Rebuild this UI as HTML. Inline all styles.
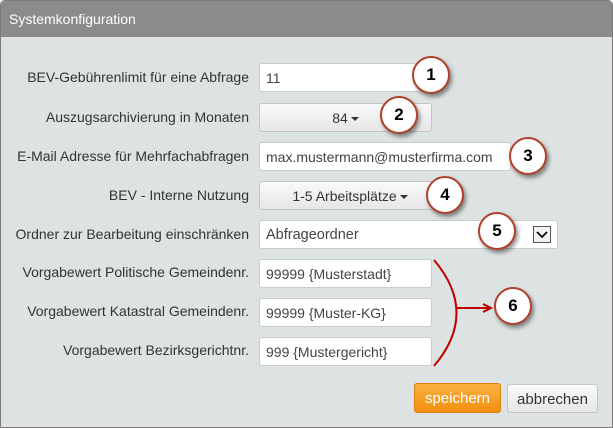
<!DOCTYPE html>
<html><head><meta charset="utf-8"><style>
*{margin:0;padding:0;box-sizing:border-box}
body{width:613px;height:428px;font-family:"Liberation Sans",Arial,sans-serif;font-size:14px;color:#333;background:#fff;position:relative;overflow:hidden}
.dlg{position:absolute;left:0;top:0;width:613px;height:428px;border:1px solid #7a7a7a;border-radius:5px 5px 0 0;background:#dde3e2;overflow:hidden}
.tb{position:absolute;left:0;top:0;right:0;height:36px;background:#8b8b8b;color:#fff;font-size:14px;padding:10px 0 0 8px}
.lbl{position:absolute;right:363px;text-align:right;white-space:nowrap;color:#333}
.inp{position:absolute;left:258px;background:#fff;border:1px solid #c9cccc;border-radius:3px;height:29px;padding:6px 0 0 6px;color:#444}
.btn{position:absolute;left:258px;border:1px solid #c4c4c4;border-radius:3px;height:29px;background:linear-gradient(#fafafa,#e6e6e6);text-align:center;padding-top:6px;color:#333}
.car{display:inline-block;width:0;height:0;border-left:4px solid transparent;border-right:4px solid transparent;border-top:4px solid #333;vertical-align:middle;margin-left:3px}
.c{position:absolute;width:38px;height:38px;border-radius:50%;background:#fff;border:2px solid #b0402c;box-shadow:2px 3px 4px rgba(0,0,0,.45);font-weight:bold;font-size:17px;color:#000;text-align:center;line-height:34px}
</style></head><body><div class="dlg">
<div class="tb">Systemkonfiguration</div>
<div class="lbl" style="top:68px">BEV-Gebührenlimit für eine Abfrage</div>
<div class="lbl" style="top:108px">Auszugsarchivierung in Monaten</div>
<div class="lbl" style="top:147px">E-Mail Adresse für Mehrfachabfragen</div>
<div class="lbl" style="top:186px">BEV - Interne Nutzung</div>
<div class="lbl" style="top:225px">Ordner zur Bearbeitung einschränken</div>
<div class="lbl" style="top:263px">Vorgabewert Politische Gemeindenr.</div>
<div class="lbl" style="top:302px">Vorgabewert Katastral Gemeindenr.</div>
<div class="lbl" style="top:341px">Vorgabewert Bezirksgerichtnr.</div>
<div class="inp" style="top:62px;width:174px">11</div>
<div class="btn" style="top:102px;width:173px">84<span class="car"></span></div>
<div class="inp" style="top:141px;width:252px">max.mustermann@musterfirma.com</div>
<div class="btn" style="top:180px;width:182px">1-5 Arbeitsplätze<span class="car"></span></div>
<div class="inp" style="top:219px;width:299px;font-size:14.5px">Abfrageordner</div>
<div style="position:absolute;left:532px;top:225px;width:18px;height:17px;border:1px solid #555;background:#f2f2f2"><svg width="16" height="15" viewBox="0 0 16 15"><path d="M3 5l5 5 5-5" fill="none" stroke="#000" stroke-width="1.8"/></svg></div>
<div class="inp" style="top:258px;width:173px">99999 {Musterstadt}</div>
<div class="inp" style="top:297px;width:173px">99999 {Muster-KG}</div>
<div class="inp" style="top:336px;width:173px">999 {Mustergericht}</div>
<svg style="position:absolute;left:0;top:0" width="613" height="428"><g fill="none" stroke="#c00000" stroke-width="2"><path d="M433 259 Q478 312 433 365"/><path d="M455 307 H489"/><path d="M482 303 L490 307 L482 311"/></g></svg>
<div class="btn" style="left:413px;top:382px;width:87px;height:30px;background:linear-gradient(#fbb040,#f39010);border-color:#d98410;color:#fff;font-size:15px">speichern</div>
<div class="btn" style="left:506px;top:383px;width:91px;height:29px;font-size:15px">abbrechen</div>
<div class="c" style="left:411px;top:55px">1</div>
<div class="c" style="left:379px;top:95px">2</div>
<div class="c" style="left:508px;top:136px">3</div>
<div class="c" style="left:425px;top:175px">4</div>
<div class="c" style="left:477px;top:211px">5</div>
<div class="c" style="left:493px;top:286px">6</div>
</div></body></html>
